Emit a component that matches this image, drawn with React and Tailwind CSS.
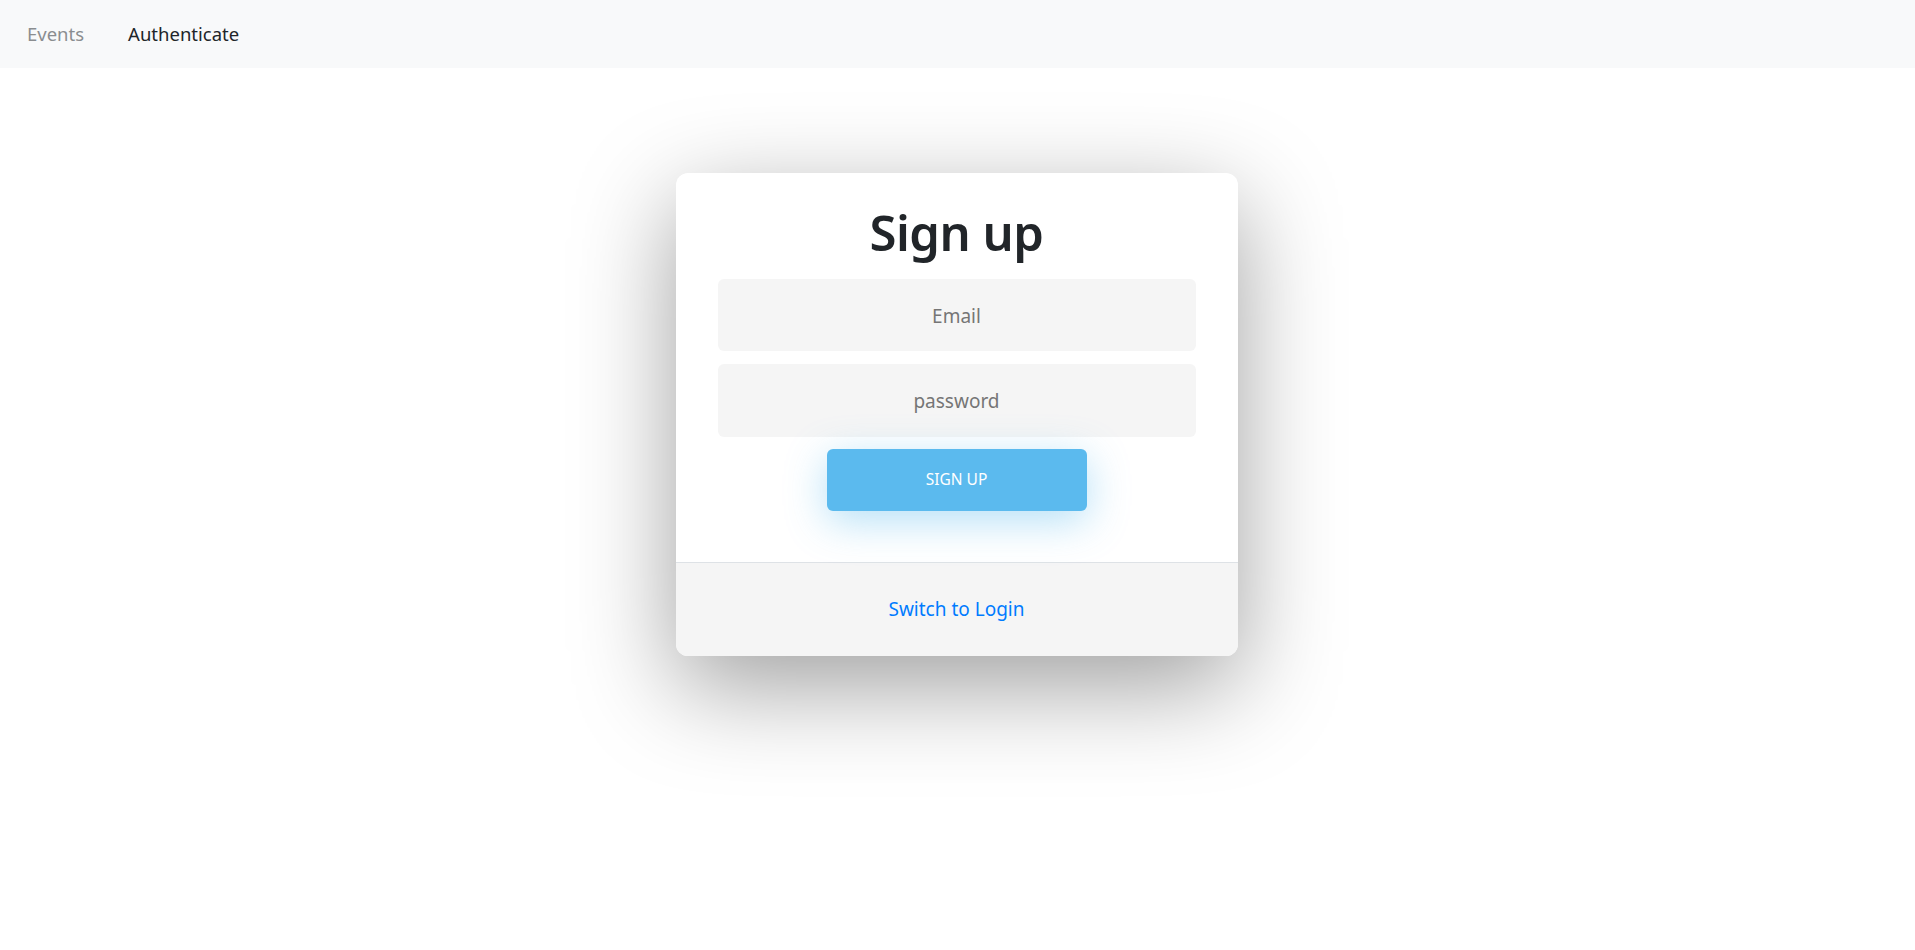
export default function App() {
  const font = { fontFamily: '"Noto Sans", "Open Sans", sans-serif' };
  return (
    <div className="min-h-screen bg-white" style={font}>
      <nav className="h-[68px] bg-[#f8f9fa] flex items-center pl-[27px] gap-[44px] text-[18.5px]">
        <span className="text-[#8a8d90]">Events</span>
        <span className="text-[#212529]">Authenticate</span>
      </nav>
      <div className="flex justify-center pt-[105px] pr-[2px]">
        <div className="w-[562px] bg-white rounded-[12px] shadow-[0_30px_100px_rgba(0,0,0,0.38)] overflow-hidden">
          <div className="flex flex-col items-center px-[42px] pt-[30px] pb-[51px]">
            <h1 className="text-[49px] font-semibold text-[#212529] leading-[1.2] tracking-[-0.5px]">Sign up</h1>
            <div className="mt-[17px] w-full h-[72px] bg-[#f5f5f5] rounded-[6px] flex items-center justify-center text-[19px] text-[#757575] pt-[2px]">Email</div>
            <div className="mt-[13px] w-full h-[73px] bg-[#f5f5f5] rounded-[6px] flex items-center justify-center text-[19px] text-[#757575] pt-[2px]">password</div>
            <button className="mt-[12px] w-[260px] h-[62px] bg-[#5bbaee] rounded-[6px] text-white text-[15.5px] shadow-[0_10px_40px_rgba(91,186,238,0.45)]">SIGN UP</button>
          </div>
          <div className="border-t border-[#dee2e6] bg-[#f5f5f5] h-[94px] flex items-center justify-center">
            <span className="text-[#007bff] text-[19px]">Switch to Login</span>
          </div>
        </div>
      </div>
    </div>
  );
}
